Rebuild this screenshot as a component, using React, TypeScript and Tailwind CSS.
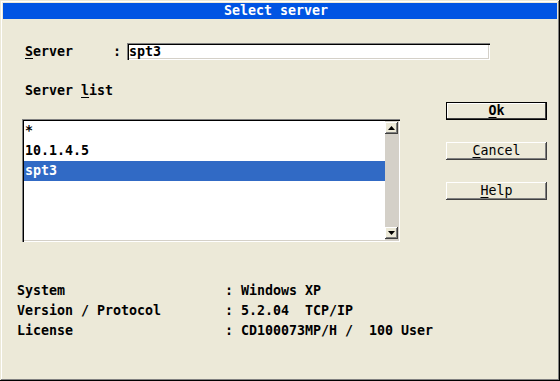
const raised =
  "shadow-[inset_-1px_-1px_#404040,inset_1px_1px_#ffffff,inset_-2px_-2px_#808080,inset_2px_2px_#ece9d8]";
const sunken =
  "shadow-[inset_1px_1px_#808080,inset_2px_2px_#000000,inset_-1px_-1px_#ffffff,inset_-2px_-2px_#d4d0c8]";

const servers = ["*", "10.1.4.5", "spt3"];

const info = [
  { label: "System", value: "Windows XP" },
  { label: "Version / Protocol", value: "5.2.04  TCP/IP" },
  { label: "License", value: "CD100073MP/H /  100 User" },
];

const Arrow = ({ down }: { down?: boolean }) => (
  <svg width="7" height="4" viewBox="0 0 7 4">
    {down ? <polygon points="0,0 7,0 3.5,4" fill="#000" /> : <polygon points="0,4 7,4 3.5,0" fill="#000" />}
  </svg>
);

const Button = ({ hot, rest, main }: { hot: string; rest: string; main?: boolean }) => (
  <div
    className={
      "w-[101px] h-[18px] flex items-center justify-center bg-[#ece9d8] leading-none " +
      (main
        ? "font-bold shadow-[inset_0_0_0_1px_#000,inset_-2px_-2px_#404040,inset_2px_2px_#ffffff]"
        : "font-normal " + raised)
    }
  >
    <span>
      <u className="underline-offset-2">{hot}</u>
      {rest}
    </span>
  </div>
);

export default function App() {
  return (
    <div className="w-[560px] h-[381px] bg-[#ece9d8] p-[3px] font-['DejaVu_Sans_Mono',monospace] font-bold text-[13.3px] text-black shadow-[inset_-1px_-1px_#000,inset_1px_1px_#ece9d8,inset_-2px_-2px_#808080,inset_2px_2px_#ffffff]">
      <div className="h-[16px] bg-[#0054e3] text-white flex items-center justify-center pr-[8px] leading-none">
        Select server
      </div>

      <div className="pl-[14px] pt-[24px]">
        {/* server field */}
        <div className="ml-[8px] flex items-center h-[17px]">
          <span className="w-[88px]">
            <u className="underline-offset-2">S</u>erver
          </span>
          <span className="w-[14px]">:</span>
          <div className={"w-[363px] h-[17px] bg-white flex items-center pl-[2px] " + sunken}>
            spt3
          </div>
        </div>

        <div className="flex mt-[21px]">
          <div className="ml-[5px] w-[378px] flex flex-col">
            <div className="ml-[3px] h-[20px] leading-[20px]">
              Server <u className="underline-offset-2">l</u>ist
            </div>
            {/* list box */}
            <div className={"mt-[18px] h-[123px] bg-white p-[2px] flex " + sunken}>
              <div className="flex-1 flex flex-col">
                {servers.map((s) => (
                  <div
                    key={s}
                    className={
                      "h-[20px] leading-[20px] pl-[1px] " +
                      (s === "spt3" ? "bg-[#316ac5] text-white" : "")
                    }
                  >
                    {s}
                  </div>
                ))}
              </div>
              <div className="w-[13px] bg-[#d4d0c8] flex flex-col justify-between py-[1px]">
                <div className={"h-[12px] bg-[#ece9d8] flex items-center justify-center " + raised}>
                  <Arrow />
                </div>
                <div className={"h-[12px] bg-[#ece9d8] flex items-center justify-center " + raised}>
                  <Arrow down />
                </div>
              </div>
            </div>
          </div>

          <div className="ml-[46px] mt-[21px] flex flex-col gap-[22px]">
            <Button hot="O" rest="k" main />
            <Button hot="C" rest="ancel" />
            <Button hot="H" rest="elp" />
          </div>
        </div>

        {/* system info */}
        <div className="mt-[39px] flex flex-col">
          {info.map((r) => (
            <div key={r.label} className="flex h-[20px] leading-[20px]">
              <span className="w-[208px]">{r.label}</span>
              <span className="w-[16px]">:</span>
              <span className="whitespace-pre">{r.value}</span>
            </div>
          ))}
        </div>
      </div>
    </div>
  );
}
